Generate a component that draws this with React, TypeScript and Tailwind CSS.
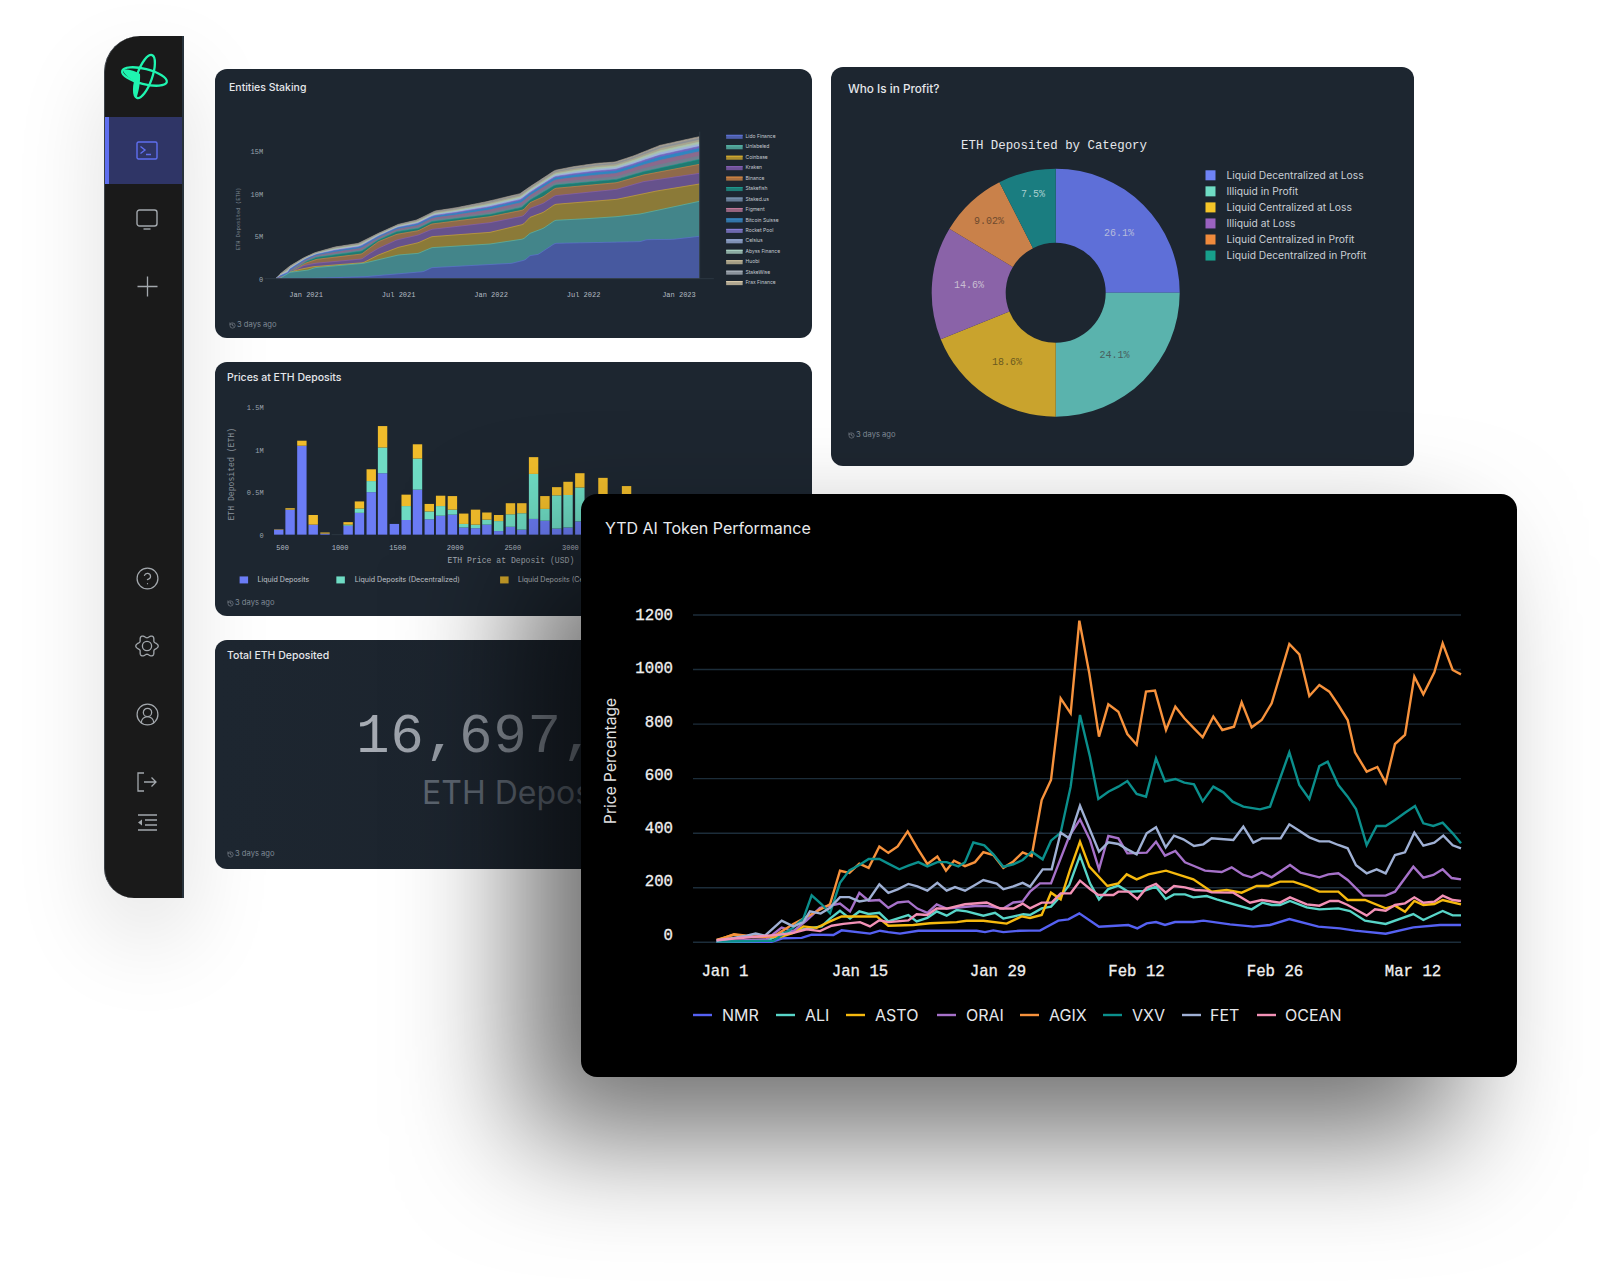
import { CircleHelp, CircleUserRound, History } from "lucide-react";
import type { ReactNode } from "react";

type P = [number, number];
const z4 = (ps: P[]) => ps.filter(([x]) => x < 1350).map(([x, y]) => `${580 + x / 3},${490 + y / 2.8}`);
const z5 = (ps: P[]) => ps.map(([x, y]) => `${1030 + x / 3},${590 + y / 3}`);

const series: { name: string; color: string; a: P[]; b: P[]; sw: number; tx: number }[] = [
  { name: "NMR", color: "#5561f2", sw: 693, tx: 722,
    a: [[410,1265],[575,1265],[610,1255],[665,1254],[695,1245],[760,1246],[785,1233],[870,1242],[900,1234],[925,1238],[960,1242],[1015,1234],[1190,1234],[1215,1238],[1240,1233],[1270,1238],[1320,1234]],
    b: [[0,1022],[30,1022],[85,992],[115,988],[148,970],[207,1010],[295,1005],[322,1015],[350,1000],[378,996],[405,1005],[435,996],[490,996],[520,992],[600,1003],[670,1010],[720,1005],[778,987],[865,1010],[930,1015],[975,1022],[1067,1031],[1150,1012],[1230,1005],[1293,1005]] },
  { name: "ALI", color: "#58d5c8", sw: 776, tx: 805,
    a: [[410,1264],[560,1262],[610,1240],[680,1228],[725,1222],[750,1200],[780,1178],[810,1200],[838,1180],[866,1187],[898,1184],[925,1208],[985,1190],[1010,1208],[1042,1198],[1070,1180],[1100,1192],[1130,1176],[1160,1180],[1210,1192],[1245,1184],[1270,1200],[1330,1188]],
    b: [[0,975],[35,955],[63,950],[92,918],[118,885],[150,797],[180,880],[207,928],[235,897],[265,887],[295,905],[340,903],[378,890],[407,927],[432,913],[465,913],[490,922],[530,918],[560,928],[665,958],[697,938],[725,945],[750,945],[780,933],[830,952],[868,958],[925,955],[960,963],[1005,992],[1067,1002],[1150,972],[1180,990],[1238,963],[1268,976],[1293,976]] },
  { name: "ASTO", color: "#f6b90e", sw: 846, tx: 875,
    a: [[410,1260],[462,1245],[520,1252],[600,1252],[640,1240],[670,1222],[710,1226],[750,1208],[785,1194],[890,1194],[925,1220],[1000,1218],[1050,1213],[1130,1210],[1160,1206],[1210,1206],[1280,1214],[1325,1194]],
    b: [[0,984],[35,975],[63,908],[92,928],[120,840],[150,755],[178,830],[232,888],[265,880],[290,853],[320,868],[355,853],[408,842],[490,868],[545,905],[590,900],[635,908],[680,888],[715,888],[750,875],[790,875],[830,888],[868,905],[925,905],[953,930],[1005,930],[1067,955],[1095,947],[1125,965],[1153,933],[1180,945],[1213,942],[1238,930],[1293,943]] },
  { name: "ORAI", color: "#a671c9", sw: 937, tx: 966,
    a: [[410,1264],[560,1258],[605,1225],[640,1235],[680,1205],[720,1170],[780,1158],[810,1180],[838,1128],[866,1150],[898,1148],[925,1170],[953,1155],[985,1152],[1012,1172],[1042,1184],[1070,1160],[1100,1172],[1125,1170],[1185,1165],[1220,1165],[1270,1172],[1300,1155],[1328,1152]],
    b: [[0,905],[30,880],[63,880],[92,805],[118,738],[150,688],[180,750],[207,838],[235,738],[265,745],[292,790],[350,788],[378,755],[405,797],[436,783],[465,817],[492,828],[525,842],[575,846],[605,832],[640,855],[665,862],[695,847],[725,862],[780,825],[812,848],[868,862],[895,853],[925,850],[953,870],[1000,917],[1067,917],[1095,905],[1150,830],[1180,863],[1210,855],[1238,838],[1265,864],[1293,868]] },
  { name: "AGIX", color: "#f7923c", sw: 1020, tx: 1049,
    a: [[410,1262],[462,1244],[520,1250],[580,1250],[640,1215],[690,1190],[750,1160],[780,1066],[808,1072],[838,1046],[866,1058],[898,998],[925,1016],[953,998],[983,956],[1012,1003],[1042,1047],[1072,1026],[1098,1066],[1122,1038],[1155,1053],[1185,1042],[1210,1014],[1240,1022],[1270,1058],[1300,1040],[1328,1015]],
    b: [[5,798],[35,630],[63,570],[92,325],[122,370],[148,92],[178,250],[207,440],[235,343],[265,365],[292,432],[320,464],[348,305],[375,302],[408,420],[436,350],[463,385],[492,415],[518,442],[550,380],[577,420],[612,410],[635,337],[665,412],[695,390],[725,340],[778,162],[808,193],[838,318],[868,285],[898,305],[925,345],[953,390],[975,487],[1010,545],[1042,531],[1067,578],[1095,462],[1125,435],[1153,260],[1180,313],[1213,247],[1238,160],[1268,240],[1293,253]] },
  { name: "VXV", color: "#0b8f8c", sw: 1103, tx: 1132,
    a: [[410,1264],[580,1262],[640,1225],[670,1200],[695,1135],[725,1160],[750,1185],[780,1100],[808,1065],[838,1050],[866,1033],[898,1033],[925,1046],[958,1062],[985,1052],[1015,1042],[1042,1054],[1072,1042],[1100,1042],[1135,1054],[1155,1042],[1180,987],[1213,995],[1240,1020],[1270,1055],[1300,1048],[1328,1036]],
    b: [[5,785],[38,808],[63,752],[92,728],[122,590],[150,375],[180,500],[205,627],[235,605],[265,590],[292,573],[320,612],[348,620],[378,505],[405,574],[436,567],[463,578],[492,583],[518,634],[550,590],[580,607],[608,635],[640,650],[690,658],[720,650],[778,487],[808,585],[838,627],[868,528],[893,515],[925,585],[953,620],[978,657],[1010,765],[1040,708],[1067,708],[1095,690],[1125,668],[1155,648],[1180,700],[1210,708],[1238,698],[1268,730],[1293,760]] },
  { name: "FET", color: "#9fb0d4", sw: 1182, tx: 1210,
    a: [[410,1262],[500,1248],[527,1242],[555,1248],[605,1206],[640,1222],[670,1210],[690,1180],[722,1186],[750,1170],[780,1140],[808,1140],[838,1152],[866,1148],[898,1104],[925,1128],[953,1118],[985,1103],[1012,1110],[1042,1122],[1072,1100],[1100,1122],[1125,1112],[1155,1122],[1185,1106],[1210,1092],[1250,1102],[1270,1118],[1300,1110],[1328,1100]],
    b: [[0,890],[38,838],[65,838],[92,728],[118,745],[150,647],[180,720],[207,785],[235,757],[265,762],[292,778],[320,793],[350,730],[378,712],[407,772],[432,737],[460,748],[492,768],[520,763],[545,745],[610,750],[640,710],[670,758],[695,745],[752,745],[778,703],[808,722],[838,742],[868,754],[898,754],[925,765],[953,775],[978,826],[1010,850],[1040,838],[1067,850],[1095,795],[1125,787],[1153,728],[1180,767],[1213,758],[1240,737],[1268,766],[1293,775]] },
  { name: "OCEAN", color: "#f291b6", sw: 1257, tx: 1285,
    a: [[410,1260],[600,1245],[640,1240],[680,1230],[720,1235],[755,1220],[790,1215],[840,1210],[870,1222],[898,1205],[925,1210],[985,1205],[1010,1188],[1042,1190],[1070,1172],[1100,1172],[1155,1160],[1220,1155],[1260,1172],[1300,1172],[1328,1158]],
    b: [[0,955],[35,938],[65,938],[92,910],[122,910],[150,872],[180,897],[205,915],[250,915],[265,905],[295,905],[322,927],[350,893],[378,882],[407,908],[432,888],[465,892],[495,900],[530,902],[545,907],[610,908],[660,938],[695,930],[750,938],[780,922],[830,943],[868,947],[900,933],[925,933],[953,945],[1010,977],[1035,958],[1067,962],[1095,945],[1125,940],[1153,922],[1180,938],[1213,935],[1238,917],[1268,930],[1293,933]] },
];

/* ---- stacked area: traced in a 3x crop whose origin is (280,100) ---- */
const interp = (pts: P[], x: number) => {
  if (x < pts[0][0]) return 535;
  for (let i = 1; i < pts.length; i++) {
    if (x <= pts[i][0]) {
      const [x0, y0] = pts[i - 1];
      const [x1, y1] = pts[i];
      return y0 + ((y1 - y0) * (x - x0)) / (x1 - x0);
    }
  }
  return pts[pts.length - 1][1];
};
const xs = Array.from({ length: 211 }, (_, i) => Math.min(i * 6, 1258));
const sample = (pts: P[]) => xs.map((x) => interp(pts, x));
const topEdge = sample([[0,522],[30,498],[70,474],[105,458],[165,441],[235,430],[295,400],[355,373],[410,360],[465,333],[530,323],[620,305],[720,281],[750,260],[825,211],[880,200],[950,190],[1005,186],[1060,168],[1140,136],[1258,110]]);
const tealEdge = sample([[25,522],[42,510],[80,484],[110,472],[245,453],[295,420],[350,395],[415,385],[455,365],[630,343],[725,322],[750,300],[825,255],[1010,238],[1090,215],[1258,178]]);
const base: { c: string; s: string; v: number[] }[] = [
  { c: "#47599f", s: "#5f73d6", v: sample([[100,535],[255,530],[430,515],[455,503],[695,490],[735,480],[750,467],[775,463],[825,430],[1080,425],[1100,419],[1180,418],[1258,409]]) },
  { c: "#43858a", s: "#5cc0b0", v: sample([[0,535],[30,517],[85,510],[105,503],[250,490],[355,465],[415,460],[455,443],[630,432],[730,417],[750,400],[790,385],[825,361],[920,356],[1010,350],[1080,342],[1258,304]]) },
  { c: "#8b7a38", s: "#d9b030", v: sample([[30,517],[60,508],[100,500],[250,488],[295,465],[355,442],[415,428],[455,410],[630,397],[730,373],[750,352],[790,337],[825,313],[1010,298],[1130,273],[1258,252]]) },
  { c: "#66528c", s: "#8a62b8", v: sample([[35,516],[70,497],[105,490],[245,477],[270,460],[295,445],[350,420],[415,405],[455,388],[630,368],[730,348],[750,325],[790,310],[825,287],[1010,268],[1090,245],[1258,220]]) },
  { c: "#8f6a4a", s: "#d98a45", v: sample([[40,512],[75,490],[110,478],[245,462],[295,425],[350,403],[415,392],[455,372],[630,350],[730,330],[750,308],[790,290],[825,265],[1010,248],[1090,225],[1258,193]]) },
  { c: "#1f7a72", s: "#1f9a8c", v: tealEdge },
];
const thin = [
  { f: 0.15, c: "#6f7f90" }, { f: 0.34, c: "#8b6a8c" }, { f: 0.48, c: "#2f86c0" }, { f: 0.57, c: "#7266c0" },
  { f: 0.67, c: "#9fb3da" }, { f: 0.76, c: "#a9c4ad" }, { f: 0.85, c: "#a9a68e" }, { f: 0.93, c: "#8d9196" }, { f: 1, c: "#a8a092" },
];
const layers = [
  ...thin.map((t) => ({ c: t.c, s: t.c, v: tealEdge.map((d, i) => d + (topEdge[i] - d) * t.f) })).reverse(),
  ...base.slice().reverse(),
];
const ax = (x: number) => 90 + x / 2.119;
const ay = (y: number) => 20 + y / 3;
const areaPts = (v: number[]) => v.map((y, i) => `${280 + xs[i] / 3},${100 + y / 3}`).join(" ");

const stakeLegend: [string, string][] = [
  ["Lido Finance","#5f73d6"],["Unlabeled","#5cc0b0"],["Coinbase","#d9b030"],["Kraken","#8a62b8"],["Binance","#d98a45"],
  ["Stakefish","#1f9a8c"],["Staked.us","#7f9ab8"],["Figment","#c07a9a"],["Bitcoin Suisse","#3a90d0"],["Rocket Pool","#8a80d8"],
  ["Celsius","#a0b4e0"],["Abyss Finance","#b0d8c8"],["Huobi","#d0c4a0"],["StakeWise","#b0b8c0"],["Frax Finance","#e0d0b0"],
];

/* ---- bars ---- */
const bars: number[][] = [
  [390,503,503,502],[414,447,447,443],[439,268,268,254],[463,489,489,462],[488,514,514,511],
  [537,492,489,482],[561,456,444,424],[586,398,367,334],[610,345,273,213],[635,487,487,487],[660,476,437,405],
  [684,391,304,264],[709,474,452,431],[733,464,437,408],[758,461,447,409],[782,497,487,458],[807,499,489,447],
  [831,489,475,455],[856,507,479,462],[881,495,460,429],[905,503,457,429],[930,473,347,300],[954,478,445,409],
  [979,500,407,384],[1003,497,406,369],[1028,480,385,345],[1077,460,420,358],[1127,480,430,381],
];
const bx = (x: number) => 90 + x / 2.119;
const by = (y: number) => 350 + y / 2.8;

/* ---- donut ---- */
const cx = 1055.7, cy = 292.7, R = 124, r = 50;
const pol = (rad: number, deg: number) => {
  const t = ((deg - 90) * Math.PI) / 180;
  return `${cx + rad * Math.cos(t)} ${cy + rad * Math.sin(t)}`;
};
const slices: [number, number, string][] = [
  [0, 90, "#5e6fd8"], [90, 180, "#5ab3ad"], [180, 248, "#c9a32d"], [248, 301, "#8a63a8"], [301, 333, "#c9814a"], [333, 360, "#1a7d80"],
];
const donutLabels: [string, number, number, string][] = [
  ["26.1%", 1119, 233, "#b5bbdc"], ["24.1%", 1114.6, 355, "#48605f"], ["18.6%", 1007, 362, "#6b5a1f"],
  ["14.6%", 969, 285.5, "#c9bfd2"], ["9.02%", 989, 221.5, "#6d4a2e"], ["7.5%", 1033, 194.5, "#a9cfcf"],
];
const donutLegend: [string, string][] = [
  ["Liquid Decentralized at Loss", "#6f83f5"], ["Illiquid in Profit", "#6fdcc4"], ["Liquid Centralized at Loss", "#f5c528"],
  ["Illiquid at Loss", "#9a62c0"], ["Liquid Centralized in Profit", "#f08a3c"], ["Liquid Decentralized in Profit", "#17a08c"],
];

/* six-lobed settings outline */
const gearPath =
  Array.from({ length: 121 }, (_, i) => {
    const t = (i / 120) * Math.PI * 2;
    const rad = 9.7 + 1.5 * Math.cos(6 * t);
    return `${i === 0 ? "M" : "L"}${(12 + rad * Math.cos(t)).toFixed(2)} ${(12 + rad * Math.sin(t)).toFixed(2)}`;
  }).join(" ") + " Z";

const MONO = "font-['Liberation_Mono',monospace]";

function Card({ className, children }: { className: string; children: ReactNode }) {
  return <section className={`flex flex-col overflow-hidden rounded-[12px] bg-[#1d2630] ${className}`}>{children}</section>;
}
function Footer({ className }: { className: string }) {
  return (
    <div className={`mt-auto flex h-[12px] items-center gap-[1px] text-[7.6px] text-[#7f8995] ${className}`}>
      <History size={7} strokeWidth={1.5} className="text-[#aab1b9]" />
      <span>3 days ago</span>
    </div>
  );
}
function NavRow({ children, className = "h-[67px]" }: { children: ReactNode; className?: string }) {
  return <div className={`flex items-center justify-center pl-[7px] text-[#a3a8ad] ${className}`}>{children}</div>;
}

export default function App() {
  return (
    <div className="relative h-[1284px] w-[1600px] overflow-hidden bg-white font-['Inter',sans-serif]">
      <div className="flex items-start pl-[104px] pt-[36px]">
        <aside className="flex h-[862px] w-[80px] shrink-0 flex-col rounded-tl-[36px] rounded-bl-[30px] border-l border-r-2 border-l-[#3c4248] border-r-[#27323b] bg-[#1a1a1a] shadow-[0_40px_90px_rgba(0,0,0,0.13)]">
          <div className="flex h-[81px] items-center justify-center pl-[1px]">
            <svg width="64" height="64" viewBox="0 -1 64 64" fill="none" stroke="#1ff5b0">
              <ellipse cx="32.5" cy="30.5" rx="23" ry="7.6" transform="rotate(14 32.5 30.5)" strokeWidth="2.3" />
              <ellipse cx="32.5" cy="30.5" rx="7.6" ry="22.7" transform="rotate(19.4 32.5 30.5)" strokeWidth="2.3" />
              <path d="M10.5 23.5 C17 23 24 25 28 28 C28.5 35 27 45 24.5 52 C21.5 48 21 41 22.5 35 C18 32.5 12.5 29.5 10.5 23.5 Z" fill="#1ff5b0" stroke="none" />
            </svg>
          </div>
          <div className="flex h-[67px] items-center justify-center border-l-[4px] border-[#5f6ff0] bg-[#2f3566] pl-[3px] text-[#5f6ff0]">
            <svg width="22" height="19" viewBox="0 0 22 19" fill="none" stroke="currentColor" strokeWidth="1.4">
              <rect x="1" y="1" width="20" height="17" rx="1.5" />
              <path d="M4.5 5.5 L9 9 L4.5 12.5 M10 13.5 H15" />
            </svg>
          </div>
          <NavRow className="h-[67px] pt-[3px]">
            <svg width="22" height="21" viewBox="0 0 22 21" fill="none" stroke="currentColor" strokeWidth="1.4">
              <rect x="1" y="1" width="20" height="16" rx="2.5" />
              <path d="M7.5 20 H14.5" />
            </svg>
          </NavRow>
          <NavRow className="h-[67px] pt-[3px]">
            <svg width="21" height="21" viewBox="0 0 21 21" fill="none" stroke="currentColor" strokeWidth="1.3">
              <path d="M10.5 0.5 V20.5 M0.5 10.5 H20.5" />
            </svg>
          </NavRow>
          <div className="flex-1" />
          <NavRow className="h-[68px]"><CircleHelp size={25} strokeWidth={1.2} /></NavRow>
          <NavRow className="h-[68px]">
            <svg width="24" height="24" viewBox="0 0 24 24" fill="none" stroke="currentColor" strokeWidth="1.3">
              <path d={gearPath} />
              <circle cx="12" cy="12" r="4.6" />
            </svg>
          </NavRow>
          <NavRow className="h-[68px]"><CircleUserRound size={25} strokeWidth={1.2} /></NavRow>
          <NavRow className="h-[66px] pt-[1px]">
            <svg width="22" height="20" viewBox="0 0 22 20" fill="none" stroke="currentColor" strokeWidth="1.3">
              <path d="M8 1 H2 V19 H8 M8 10 H20 M15.5 5.5 L20 10 L15.5 14.5" />
            </svg>
          </NavRow>
          <NavRow className="mb-[68px] h-[16px]">
            <svg width="21" height="17" viewBox="0 0 21 17" fill="none" stroke="currentColor" strokeWidth="1.5">
              <path d="M1 1 H20 M8 6 H20 M8 11 H20 M1 16 H20" />
              <path d="M5 5.5 V11.5 L1 8.5 Z" fill="currentColor" stroke="none" />
            </svg>
          </NavRow>
        </aside>

        <div className="ml-[31px] mt-[33px] flex w-[597px] shrink-0 flex-col gap-[24px]">
          <Card className="h-[269px] pl-[14px]">
            <h2 className="pt-[12px] text-[10.5px] leading-[14px] font-medium text-[#e5e7eb]">Entities Staking</h2>
            <svg viewBox="215 95 597 222" className={`-ml-[14px] h-[222px] w-[597px] text-[7px] ${MONO}`}>
              {layers.map((l, i) => (
                <g key={i}>
                  <polygon points={`276,${100 + 535 / 3} ${areaPts(l.v)} ${280 + 1258 / 3},${100 + 535 / 3}`} fill={l.c} />
                  <polyline points={areaPts(l.v)} fill="none" stroke={l.s} strokeWidth="0.6" />
                </g>
              ))}
              <path d={`M${ax(370)} ${ay(776)} H${ax(1322)} M${ax(1292)} ${ay(335)} V${ay(776)}`} stroke="#2b3642" strokeWidth="1" />
              {[["15M", 395], ["10M", 522], ["5M", 650], ["0", 778]].map(([t, y]) => (
                <text key={t} x={ax(367)} y={ay(Number(y)) + 2.5} textAnchor="end" fill="#9aa3ad">{t}</text>
              ))}
              {[["Jan 2021", 458], ["Jul 2021", 654], ["Jan 2022", 850], ["Jul 2022", 1046], ["Jan 2023", 1248]].map(([t, x]) => (
                <text key={t} x={ax(Number(x))} y={ay(823) + 2.5} textAnchor="middle" fill="#b4bbc3">{t}</text>
              ))}
              <text transform={`translate(${ax(313) + 2} ${ay(597)}) rotate(-90)`} textAnchor="middle" fill="#7f8893" className="text-[5.5px]">ETH Deposited (ETH)</text>
              {stakeLegend.map(([t, c], i) => {
                const y = ay(349 + i * 31.35);
                return (
                  <g key={t}>
                    <rect x={ax(1348)} y={y - 1.5} width="16.5" height="4" fill={c} opacity="0.75" />
                    <rect x={ax(1348)} y={y - 1.5} width="16.5" height="1" fill={c} />
                    <text x={ax(1389)} y={y + 1.6} fill="#c5cad0" className="font-['Inter',sans-serif] text-[5px]">{t}</text>
                  </g>
                );
              })}
            </svg>
            <Footer className="mb-[7px]" />
          </Card>

          <Card className="h-[254px] pl-[12px]">
            <h2 className="pt-[9px] text-[10.5px] leading-[14px] font-medium text-[#e5e7eb]">Prices at ETH Deposits</h2>
            <svg viewBox="215 385 597 206" className={`-ml-[12px] h-[206px] w-[597px] text-[7px] ${MONO}`}>
              {bars.map(([x, b, t, y]) => {
                const X = bx(x), W = 9.4, B = by(517);
                return (
                  <g key={x}>
                    <rect x={X} y={by(b)} width={W} height={Math.max(B - by(b), 0)} fill="#6b7cf5" />
                    <rect x={X} y={by(t)} width={W} height={by(b) - by(t)} fill="#6fdcc4" />
                    <rect x={X} y={by(y)} width={W} height={by(t) - by(y)} fill="#f0bc2b" />
                  </g>
                );
              })}
              <path d={`M${bx(512)} ${by(517)} H${bx(535)}`} stroke="#2b3640" />
              {[["1.5M", 161], ["1M", 281], ["0.5M", 400], ["0", 518]].map(([t, y]) => (
                <text key={t} x={bx(368)} y={by(Number(y)) + 2.5} textAnchor="end" fill="#9aa3ad">{t}</text>
              ))}
              {[["500", 408], ["1000", 530], ["1500", 652], ["2000", 774], ["2500", 896], ["3000", 1018]].map(([t, x]) => (
                <text key={t} x={bx(Number(x))} y={by(552) + 2.5} textAnchor="middle" fill="#b4bbc3">{t}</text>
              ))}
              <text x={bx(892)} y={by(588) + 3} textAnchor="middle" fill="#a8afb7" className="text-[8.15px]">ETH Price at Deposit (USD)</text>
              <text transform={`translate(${bx(298) + 3} ${by(348)}) rotate(-90)`} textAnchor="middle" fill="#8a929c" className="text-[8.15px]">ETH Deposited (ETH)</text>
              {[[317, 355, "#6b7cf5", "Liquid Deposits"], [522, 561, "#6fdcc4", "Liquid Deposits (Decentralized)"], [869, 907, "#d9ab2b", "Liquid Deposits (Centralized)"]].map(([s, t, c, label]) => (
                <g key={String(label)}>
                  <rect x={bx(Number(s))} y={by(634)} width="8.5" height="7" fill={String(c)} />
                  <text x={bx(Number(t))} y={by(643) + 2.7} fill="#c0c5cb" className="font-['Inter',sans-serif] text-[7.1px]">{label}</text>
                </g>
              ))}
            </svg>
            <Footer className="mb-[7px]" />
          </Card>

          <Card className="h-[229px] bg-gradient-to-r from-[#1d2630] to-[#1b222b] pl-[12px]">
            <h2 className="pt-[9px] text-[10.5px] leading-[14px] font-medium text-[#e5e7eb]">Total ETH Deposited</h2>
            <div className={`ml-[129px] mt-[50px] w-max whitespace-nowrap bg-gradient-to-r from-[#a9aeb6] to-[#58616c] bg-clip-text text-[56px] leading-[48px] tracking-[0.7px] text-transparent ${MONO}`}>16,697,430</div>
            <div className="mt-[12px] whitespace-nowrap pl-[195px] text-[32px] leading-[40px] text-[#5c6570]">ETH Deposited</div>
            <Footer className="mb-[9px]" />
          </Card>
        </div>

        <Card className="ml-[19px] mt-[31px] h-[399px] w-[583px] shrink-0 pl-[17px]">
          <h2 className="pt-[15px] text-[11.75px] leading-[14px] font-medium text-[#e5e7eb]">Who Is in Profit?</h2>
          <svg viewBox="831 96 583 330" className={`-ml-[17px] h-[330px] w-[583px] ${MONO}`}>
            <text x="1054" y="149" textAnchor="middle" fill="#e5e7eb" className="text-[12.4px]">ETH Deposited by Category</text>
            {slices.map(([a, b, c]) => (
              <path key={a} d={`M${pol(R, a)} A${R} ${R} 0 0 1 ${pol(R, b)} L${pol(r, b)} A${r} ${r} 0 0 0 ${pol(r, a)} Z`} fill={c} />
            ))}
            {donutLabels.map(([t, x, y, c]) => (
              <text key={t} x={x} y={y} textAnchor="middle" dominantBaseline="middle" fill={c} className="text-[10px]">{t}</text>
            ))}
            {donutLegend.map(([t, c], i) => {
              const y = 175.3 + i * 16.05;
              return (
                <g key={t}>
                  <rect x="1205.5" y={y - 5} width="10" height="10" fill={c} />
                  <text x="1226.5" y={y + 3.6} fill="#c9ced4" className="font-['Inter',sans-serif] text-[10.27px]">{t}</text>
                </g>
              );
            })}
          </svg>
          <Footer className="mb-[25px]" />
        </Card>
      </div>

      <section className="absolute left-[581px] top-[494px] flex h-[583px] w-[936px] flex-col rounded-[16px] bg-black shadow-[-60px_60px_120px_rgba(0,0,0,0.56)]">
        <h2 className="pl-[24px] pt-[24px] text-[16px] leading-[20px] text-[#e8eaed]">YTD AI Token Performance</h2>
        <svg viewBox="581 538 936 539" className={`h-[539px] w-[936px] text-[15.7px] ${MONO}`}>
          {[0, 200, 400, 600, 800, 1000, 1200].map((v, i) => {
            const y = 942.3 - i * 54.55;
            return (
              <g key={v}>
                <path d={`M693 ${y} H1461`} stroke="#1c2d3a" strokeWidth="1.4" />
                <text x="673" y={934.6 - i * 53.27 + 5} textAnchor="end" fill="#f0f0f0" stroke="#f0f0f0" strokeWidth="0.3">{v}</text>
              </g>
            );
          })}
          {[["Jan 1", 725], ["Jan 15", 860], ["Jan 29", 998], ["Feb 12", 1136.5], ["Feb 26", 1275], ["Mar 12", 1413]].map(([t, x]) => (
            <text key={t} x={x} y="976" textAnchor="middle" fill="#f0f0f0" stroke="#f0f0f0" strokeWidth="0.3">{t}</text>
          ))}
          <text transform="translate(615.5 761) rotate(-90)" textAnchor="middle" fill="#e0e0e0" className="font-['Inter',sans-serif] text-[15.5px]">Price Percentage</text>
          {series.map((s) => (
            <polyline key={s.name} points={[...z4(s.a), ...z5(s.b)].join(" ")} fill="none" stroke={s.color} strokeWidth="2.4" strokeLinejoin="miter" />
          ))}
          {series.map((s) => (
            <g key={s.name}>
              <path d={`M${s.sw} 1015 H${s.sw + 19}`} stroke={s.color} strokeWidth="2.4" />
              <text x={s.tx} y="1021" fill="#e5e7eb" className="font-['Inter',sans-serif] text-[16px]">{s.name}</text>
            </g>
          ))}
        </svg>
      </section>
    </div>
  );
}
